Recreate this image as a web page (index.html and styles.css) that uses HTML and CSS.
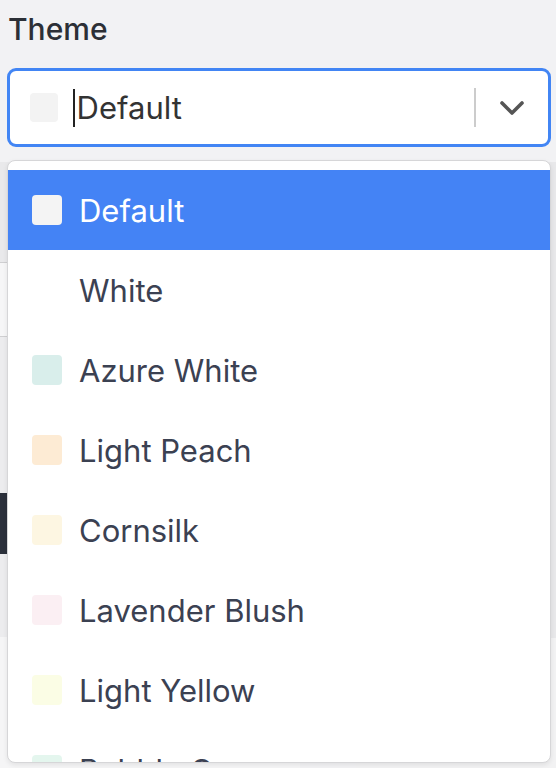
FILE: index.html
```html
<!DOCTYPE html>
<html lang="en">
<head>
<meta charset="utf-8">
<title>Theme</title>
<link rel="stylesheet" href="styles.css">
</head>
<body>
<div class="field">
  <div class="label">Theme</div>
  <div class="control">
    <span class="swatch sw-default"></span>
    <span class="caret"></span>
    <span class="value">Default</span>
    <span class="sep"></span>
    <span class="indicator">
      <svg width="26" height="16" viewBox="0 0 26 16"><path d="M3 3 L13 13 L23 3" fill="none" stroke="#555" stroke-width="3.6" stroke-linecap="round" stroke-linejoin="round"/></svg>
    </span>
  </div>
  <div class="menu">
    <div class="option selected"><span class="swatch sw-default"></span><span>Default</span></div>
    <div class="option"><span class="swatch sw-white"></span><span>White</span></div>
    <div class="option"><span class="swatch sw-azure"></span><span>Azure White</span></div>
    <div class="option"><span class="swatch sw-peach"></span><span>Light Peach</span></div>
    <div class="option"><span class="swatch sw-cornsilk"></span><span>Cornsilk</span></div>
    <div class="option"><span class="swatch sw-lavender"></span><span>Lavender Blush</span></div>
    <div class="option"><span class="swatch sw-yellow"></span><span>Light Yellow</span></div>
    <div class="option"><span class="swatch sw-bubble"></span><span>Bubble Gum</span></div>
  </div>
</div>
<div class="under">
  <div class="left-col">
    <div class="blk a"></div>
    <div class="blk b"></div>
    <div class="blk c"></div>
    <div class="blk d"></div>
    <div class="blk e"></div>
    <div class="blk f"></div>
  </div>
  <div class="right-col">
    <div class="blk r1"></div>
    <div class="blk r2"></div>
  </div>
</div>
</body>
</html>
```
FILE: styles.css
```css
html, body {
  margin: 0;
  padding: 0;
  background: #f2f2f4;
  font-family: Inter, "Noto Sans", sans-serif;
  color: #3b4152;
  overflow: hidden;
  height: 768px;
}
.field {
  position: relative;
  padding: 11px 5px 0 7px;
  z-index: 2;
}
.label {
  font-size: 30px;
  line-height: 36px;
  font-weight: 500;
  color: #2c2f36;
  padding-left: 1px;
  margin-bottom: 21px;
}
.control {
  box-sizing: border-box;
  height: 79px;
  border: 3px solid #4285f4;
  border-radius: 9px;
  background: #fff;
  display: flex;
  align-items: center;
  padding-left: 20px;
}
.swatch {
  width: 30px;
  height: 30px;
  border-radius: 4px;
  flex: none;
}
.control .swatch {
  width: 28px;
  height: 29px;
}
.caret {
  width: 1.6px;
  height: 38px;
  background: #222;
  margin-left: 15px;
  flex: none;
}
.value {
  font-size: 31px;
  color: #333;
  flex: 1;
  padding-left: 2px;
}
.sep {
  width: 2px;
  height: 39px;
  background: #cccccc;
  flex: none;
}
.indicator {
  width: 72px;
  display: flex;
  justify-content: center;
  align-items: center;
  flex: none;
}
.sw-default { background: #f3f3f3; }
.sw-white { background: #ffffff; }
.sw-azure { background: #d9eeeb; }
.sw-peach { background: #fdebd4; }
.sw-cornsilk { background: #fdf6e2; }
.sw-lavender { background: #fbeff3; }
.sw-yellow { background: #fbfde5; }
.sw-bubble { background: #e4f6ee; }
.menu {
  position: absolute;
  left: 7px;
  right: 5px;
  top: 160px;
  height: 603px;
  box-sizing: border-box;
  background: #fff;
  border: 1px solid #d6d6d8;
  border-radius: 8px;
  box-shadow: 0 2px 5px rgba(0,0,0,0.08);
  padding-top: 9px;
  overflow: hidden;
}
.option {
  height: 80px;
  display: flex;
  align-items: center;
  padding-left: 24px;
  gap: 17px;
  font-size: 31px;
  color: #3b4152;
}
.option.selected {
  background: #4483f5;
  color: #fff;
}
.option.selected .swatch { background: #f4f4f4; }
.under {
  position: absolute;
  left: 0;
  right: 0;
  top: 162px;
  z-index: 1;
  display: flex;
  justify-content: space-between;
}
.left-col { width: 300px; }
.right-col { width: 200px; }
.blk { width: 100%; }
.a { height: 100px; background: #e9e9eb; border-bottom: 1px solid #cfcfd1; }
.b { height: 73px; background: #f6f6f7; border-bottom: 1px solid #cfcfd1; }
.c { height: 156px; background: #ececee; }
.d { height: 61px; background: #2b303b; }
.e { height: 83px; background: #ececee; }
.f { height: 140px; background: #f5f5f6; }
.r1 { height: 476px; background: #e8e8ea; }
.r2 { height: 140px; background: #f2f2f3; }
```
